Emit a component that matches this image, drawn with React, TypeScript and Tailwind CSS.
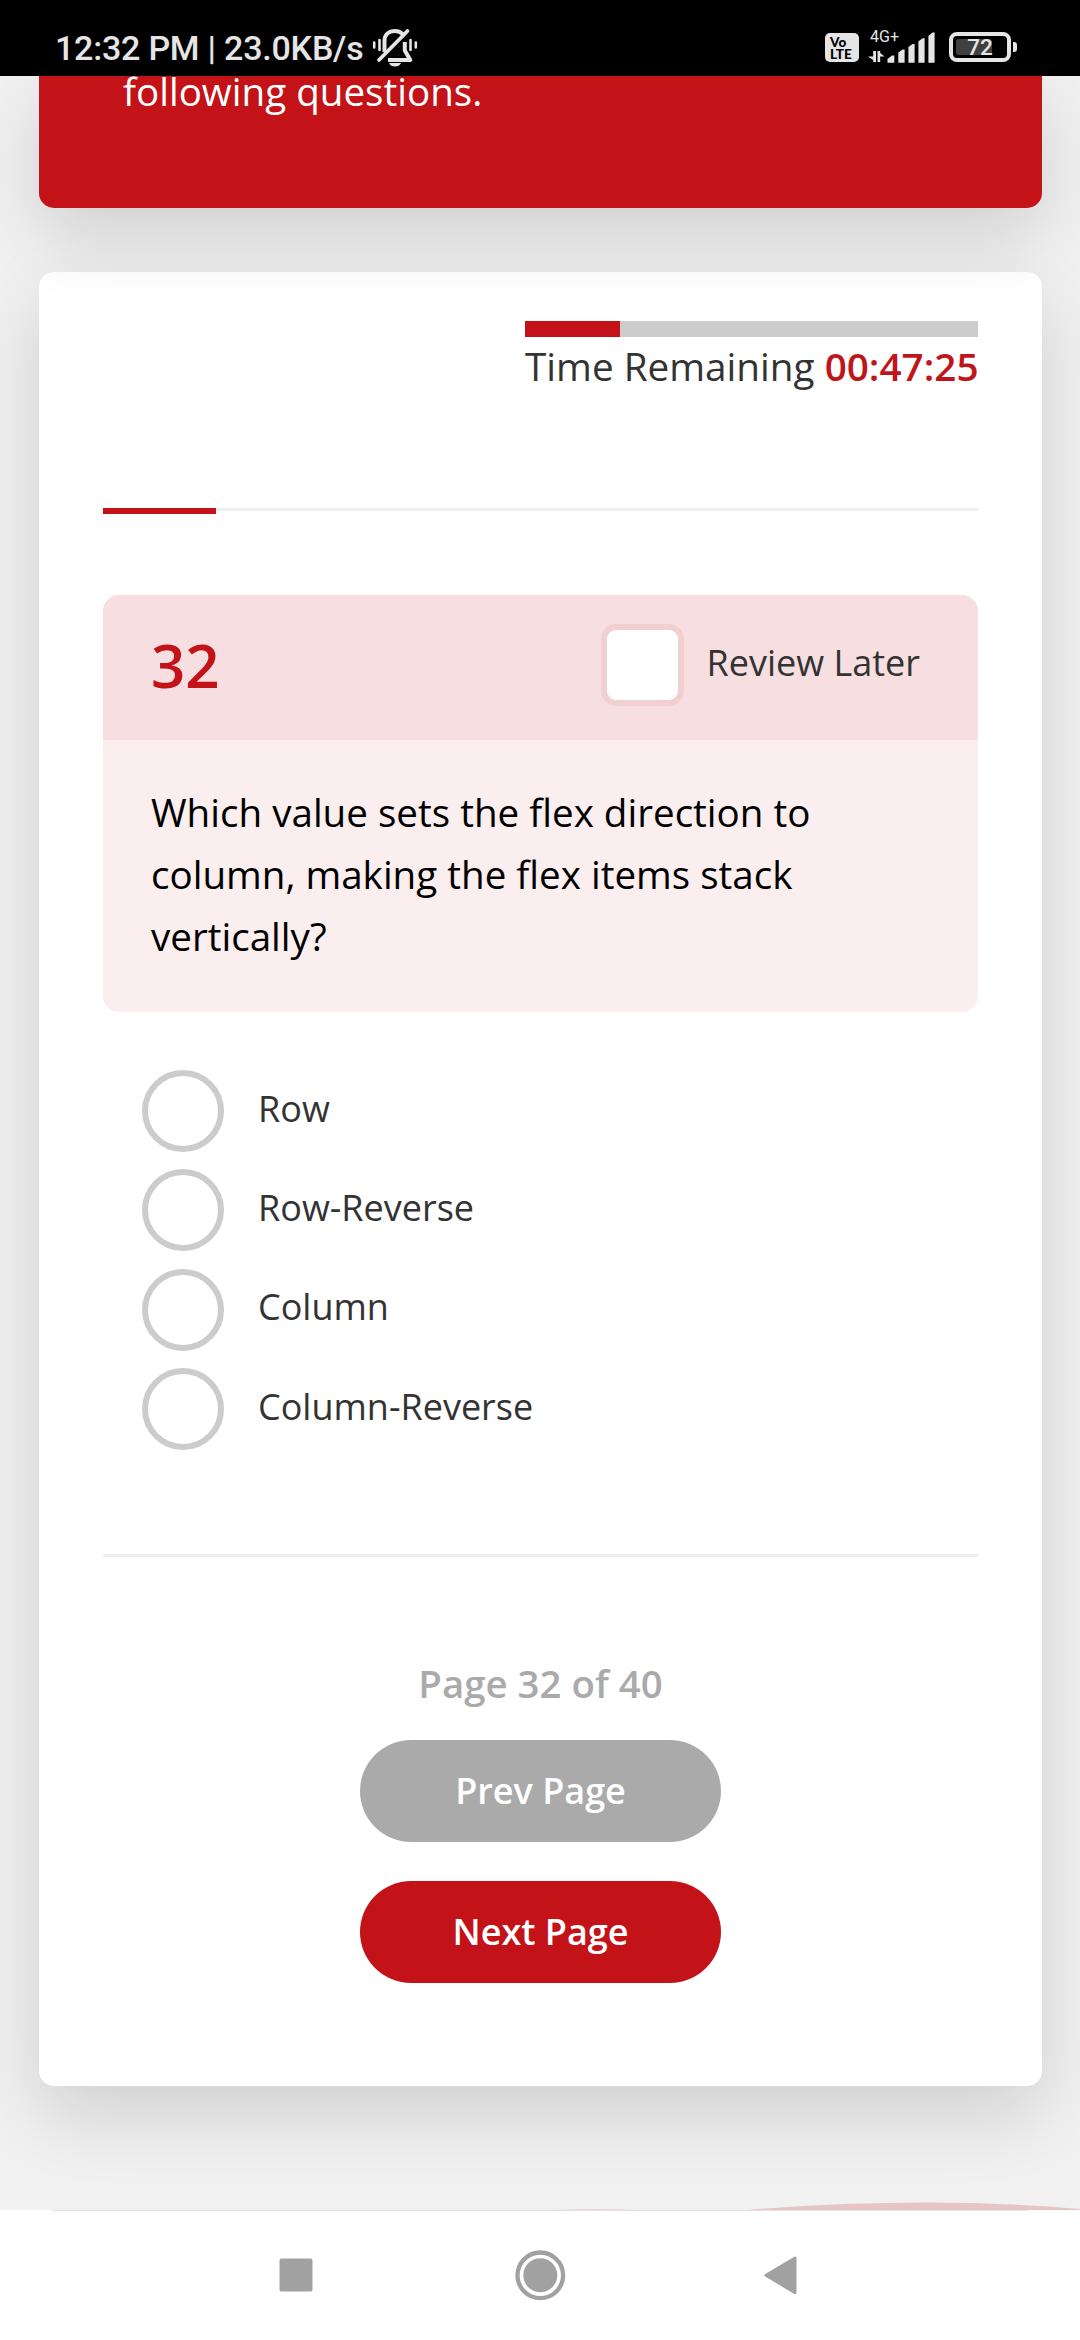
import React from "react";

const INK = "#e5e5e5";

function MutedBell() {
  return (
    <svg className="ml-[9px] h-[40px] w-[46px]" viewBox="372 28 46 40" fill="none" stroke={INK} strokeLinecap="round">
      <path d="M384.5 52 V41 C384.500 34.500 389 31 395 31 C398.500 31 401 32.200 402.800 34.200" strokeWidth="4" strokeLinecap="butt" />
      <path d="M404.800 42 V50.500 L410.300 60 H388" strokeWidth="4" strokeLinecap="butt" strokeLinejoin="round" />
      <path d="M379 60 L407.500 31" strokeWidth="3.8" />
      <path d="M389 63 H401 C400 65.300 397.800 66.600 395 66.600 C392.200 66.600 390 65.300 389 63 Z" fill={INK} stroke="none" />
      <path d="M374.200 42.500 V47.500 M379.500 40 V50 M410.500 40 V50 M415.800 42.500 V47.500" strokeWidth="2.600" />
    </svg>
  );
}

function SignalBars() {
  return (
    <svg className="h-[38px] w-[68px]" viewBox="868 25 68 38" fill={INK}>
      <text x="870" y="42" fontFamily="Roboto" fontSize="16" textLength="29" lengthAdjust="spacingAndGlyphs">4G+</text>
      <path d="M876 51 V62 H873.200 V60 L868 56.500 H873.200 V51 Z M877.500 51 H880.200 V53 L884.500 56.500 H880.200 V62 H877.500 Z" />
      <path d="M887.500 62.700 V59 L892 55.500 H894.300 V62.700 Z" />
      <path d="M898.300 62.700 V52.500 L902.500 49.500 H904.600 V62.700 Z" />
      <path d="M908.400 62.700 V47 L912.500 44 H914.600 V62.700 Z" />
      <path d="M918.400 62.700 V41.500 L922.500 38.300 H924.600 V62.700 Z" />
      <path d="M928.400 62.700 V36 L932.500 32.600 H934.600 V62.700 Z" />
    </svg>
  );
}

function StatusBar() {
  return (
    <header className="flex h-[76px] shrink-0 items-start bg-black pl-[55px] pr-[63px] pt-[25px] font-['Roboto'] text-[#e5e5e5]">
      <span className="mt-[3px] whitespace-pre text-[34px] font-medium leading-[41px] tracking-[-0.22px]">12:32 PM | 23.0KB/s</span>
      <div className="mt-[3px]"><MutedBell /></div>
      <div className="ml-auto flex items-start">
        <div className="mt-2 flex h-[29px] w-[34px] flex-col items-start rounded-[5px] bg-[#e5e5e5] pl-[5px] pt-[3px] font-['Lato'] text-[13.5px] font-black leading-[12px] text-black">
          <span>Vo</span>
          <span>LTE</span>
        </div>
        <div className="ml-[9px]"><SignalBars /></div>
        <div className="relative ml-[13px] mt-[7px] flex h-[30px] w-[62px] items-center justify-center rounded-[8px] border-4 border-[#e5e5e5]">
          <div className="absolute left-[3px] top-[3px] h-4 w-9 rounded-[3px] bg-[#404040]" />
          <span className="relative text-[22.5px] font-medium leading-none">72</span>
        </div>
        <div className="ml-0.5 mt-[17px] h-[10px] w-1 rounded-r-[3px] bg-[#e5e5e5]" />
      </div>
    </header>
  );
}

function Option({ label }: { label: string }) {
  return (
    <label className="flex h-[99.33px] items-start">
      <span className="h-[82px] w-[82px] rounded-full border-6 border-[#cccccc]" />
      <span className="ml-[34px] mt-[11.6px] text-[36px] leading-[53px] text-[#333333]">{label}</span>
    </label>
  );
}

function NavigationBar() {
  return (
    <footer className="relative z-20 h-[130px] shrink-0 bg-white">
      <div className="mx-[52px] h-px bg-[#e3e3e3]" />
      <svg className="h-[129px] w-full" viewBox="0 2211 1080 129" fill="#a1a1a1">
        <rect x="279.500" y="2258.500" width="33" height="33" rx="2" />
        <circle cx="540.300" cy="2275.300" r="22.800" fill="none" stroke="#a1a1a1" strokeWidth="4.300" />
        <circle cx="540.300" cy="2275.300" r="17" />
        <path d="M766 2275.300 L795 2258 V2292.600 Z" stroke="#a1a1a1" strokeWidth="3" strokeLinejoin="round" />
      </svg>
    </footer>
  );
}

const options = ["Row", "Row-Reverse", "Column", "Column-Reverse"];

export default function App() {
  return (
    <div className="flex h-[2340px] w-[1080px] flex-col overflow-hidden bg-[#f1f1f1] font-['Open_Sans',sans-serif]">
      <StatusBar />
      <main className="relative flex-1 overflow-hidden px-[39px]">
        <section className="relative z-10 mr-[-1px] h-[132px] rounded-b-[15px] bg-[#c31218] pl-[84px] pt-px text-[38.6px] leading-[28px] text-white shadow-[0_26px_72px_rgba(0,0,0,0.14)]">
          following questions.
        </section>
        <section className="relative mr-[-1px] mt-16 flex h-[1814px] flex-col rounded-[15px] bg-white px-16 pt-[49px] shadow-[0_28px_75px_rgba(0,0,0,0.14)]">
          <div className="flex w-[453px] flex-col self-end">
            <div className="h-4 bg-[#cccccc]"><div className="h-4 w-[95px] bg-[#c31218]" /></div>
            <p className="mt-[3px] whitespace-nowrap text-[38.7px] leading-[53px] text-[#333333]">
              Time Remaining <span className="font-semibold text-[#bf161b]">00:47:25</span>
            </p>
          </div>
          <div className="mt-[115px] h-[6px]">
            <div className="h-[3px] bg-[#eeeeee]"><div className="h-[6px] w-[113px] bg-[#c31218]" /></div>
          </div>

          <div className="mt-[81px] h-[417px] overflow-hidden rounded-[16px] bg-[#faeeee]">
            <div className="flex h-[145px] items-start bg-[#f6dee1] pl-12 pr-[58px]">
              <h2 className="mt-[29px] text-[60px] font-semibold leading-[82px] text-[#c31218]">32</h2>
              <span className="ml-auto mt-[29px] h-[82px] w-[83px] rounded-[15px] border-6 border-[#f2d0d2] bg-white" />
              <span className="ml-[22px] mt-[41px] text-[36px] leading-[54px] text-[#333333]">Review Later</span>
            </div>
            <p className="w-[720px] pl-12 pt-[41px] text-[38.6px] leading-[62px] text-black">
              Which value sets the flex direction to column, making the flex items stack vertically?
            </p>
          </div>

          <div className="ml-[39px] mt-[58px]">
            {options.map((o) => <Option key={o} label={o} />)}
          </div>

          <div className="mt-[87px] h-[3px] shrink-0 bg-[#eeeeee]" />

          <div className="flex flex-col items-center pt-[95px]">
            <p className="text-[38.4px] font-semibold leading-[62px] text-[#aaaaaa]">Page 32 of 40</p>
            <button className="mt-[26px] h-[102px] w-[361px] rounded-full bg-[#aaaaaa] text-[36px] font-semibold leading-none text-white">Prev Page</button>
            <button className="mt-[39px] h-[102px] w-[361px] rounded-full bg-[#c31218] text-[36px] font-semibold leading-none text-white">Next Page</button>
          </div>
        </section>
        <svg className="absolute bottom-0 right-0 h-[10px] w-[540px]" viewBox="540 2200 540 10" fill="#e8c5c5">
          <path d="M746 2210 Q836 2202.600 925 2202.600 Q1005 2202.600 1080 2209 V2210 Z" />
          <path d="M550 2210 Q595 2208.300 640 2210 Z" />
        </svg>
      </main>
      <NavigationBar />
    </div>
  );
}
